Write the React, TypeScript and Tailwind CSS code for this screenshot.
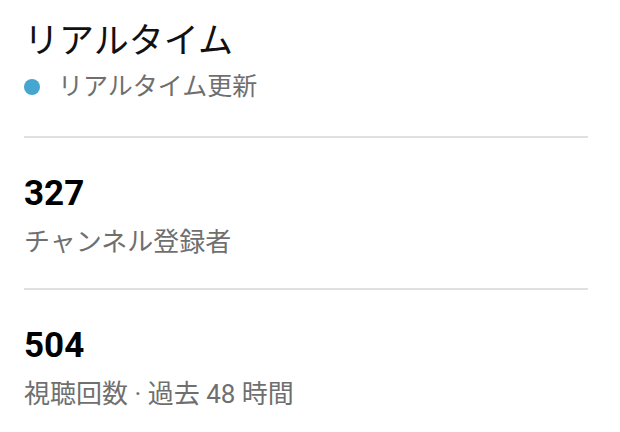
const FONT = "font-['Roboto','Noto_Sans_CJK_JP',sans-serif]";

interface StatProps {
  value: string;
  label: string;
}

const Stat = ({ value, label }: StatProps) => (
  <div className="border-t-2 border-[#e0e0e0] pt-[36px] pb-[29px]">
    <div className="text-[35px] leading-[40px] font-bold text-black">{value}</div>
    <div className="mt-[11px] text-[26px] leading-[34px] text-[#6f6f6f]">{label}</div>
  </div>
);

export default function App() {
  return (
    <div className={`min-h-screen bg-white pl-6 pr-8 ${FONT}`}>
      <div className="pt-[20px] pb-[33px]">
        <h1 className="text-[35px] leading-[44px] font-normal text-[#111]">リアルタイム</h1>
        <div className="flex items-center gap-[18px] mt-[7px]">
          <span className="w-4 h-4 rounded-full bg-[#47a6cf]" />
          <span className="text-[25px] leading-[32px] text-[#6f6f6f]">リアルタイム更新</span>
        </div>
      </div>
      <Stat value="327" label="チャンネル登録者" />
      <Stat value="504" label="視聴回数 · 過去 48 時間" />
    </div>
  );
}
